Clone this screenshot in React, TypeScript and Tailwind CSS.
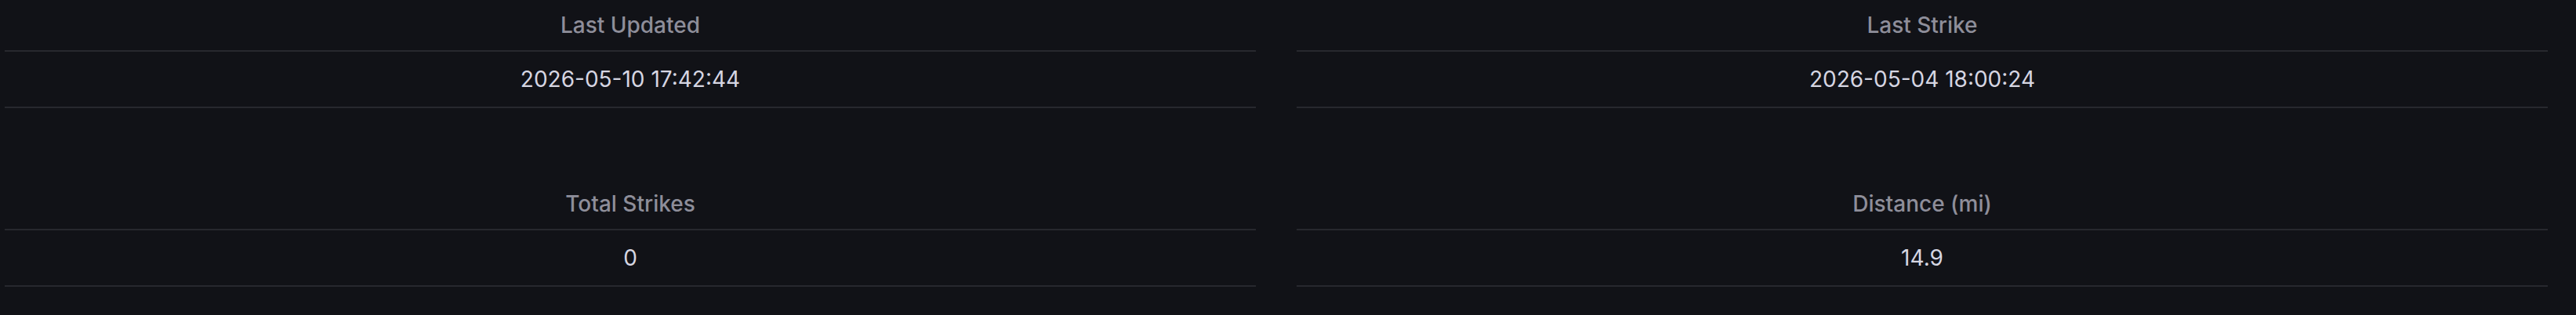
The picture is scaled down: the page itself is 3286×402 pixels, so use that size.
const panels = [
  [
    { title: 'Last Updated', value: '2026-05-10 17:42:44' },
    { title: 'Last Strike', value: '2026-05-04 18:00:24' },
  ],
  [
    { title: 'Total Strikes', value: '0' },
    { title: 'Distance (mi)', value: '14.9' },
  ],
];

function StatTable({ title, value }: { title: string; value: string }) {
  return (
    <div className="flex flex-col">
      <div className="flex h-[66px] items-center justify-center border-b-2 border-[#27282e] text-[28px] font-medium text-[#8e8e9a]">
        {title}
      </div>
      <div className="flex h-[72px] items-center justify-center border-b-2 border-[#27282e] text-[28px] text-[#d6d6e2]">
        {value}
      </div>
    </div>
  );
}

export default function App() {
  return (
    <div
      className="flex h-[402px] w-full flex-col gap-[90px] bg-[#111217] pl-[6px] pr-[36px]"
      style={{ fontFamily: 'Inter, "Noto Sans", sans-serif' }}
    >
      {panels.map((row, i) => (
        <div key={i} className="grid grid-cols-2 gap-[52px]">
          {row.map((p) => (
            <StatTable key={p.title} title={p.title} value={p.value} />
          ))}
        </div>
      ))}
    </div>
  );
}
